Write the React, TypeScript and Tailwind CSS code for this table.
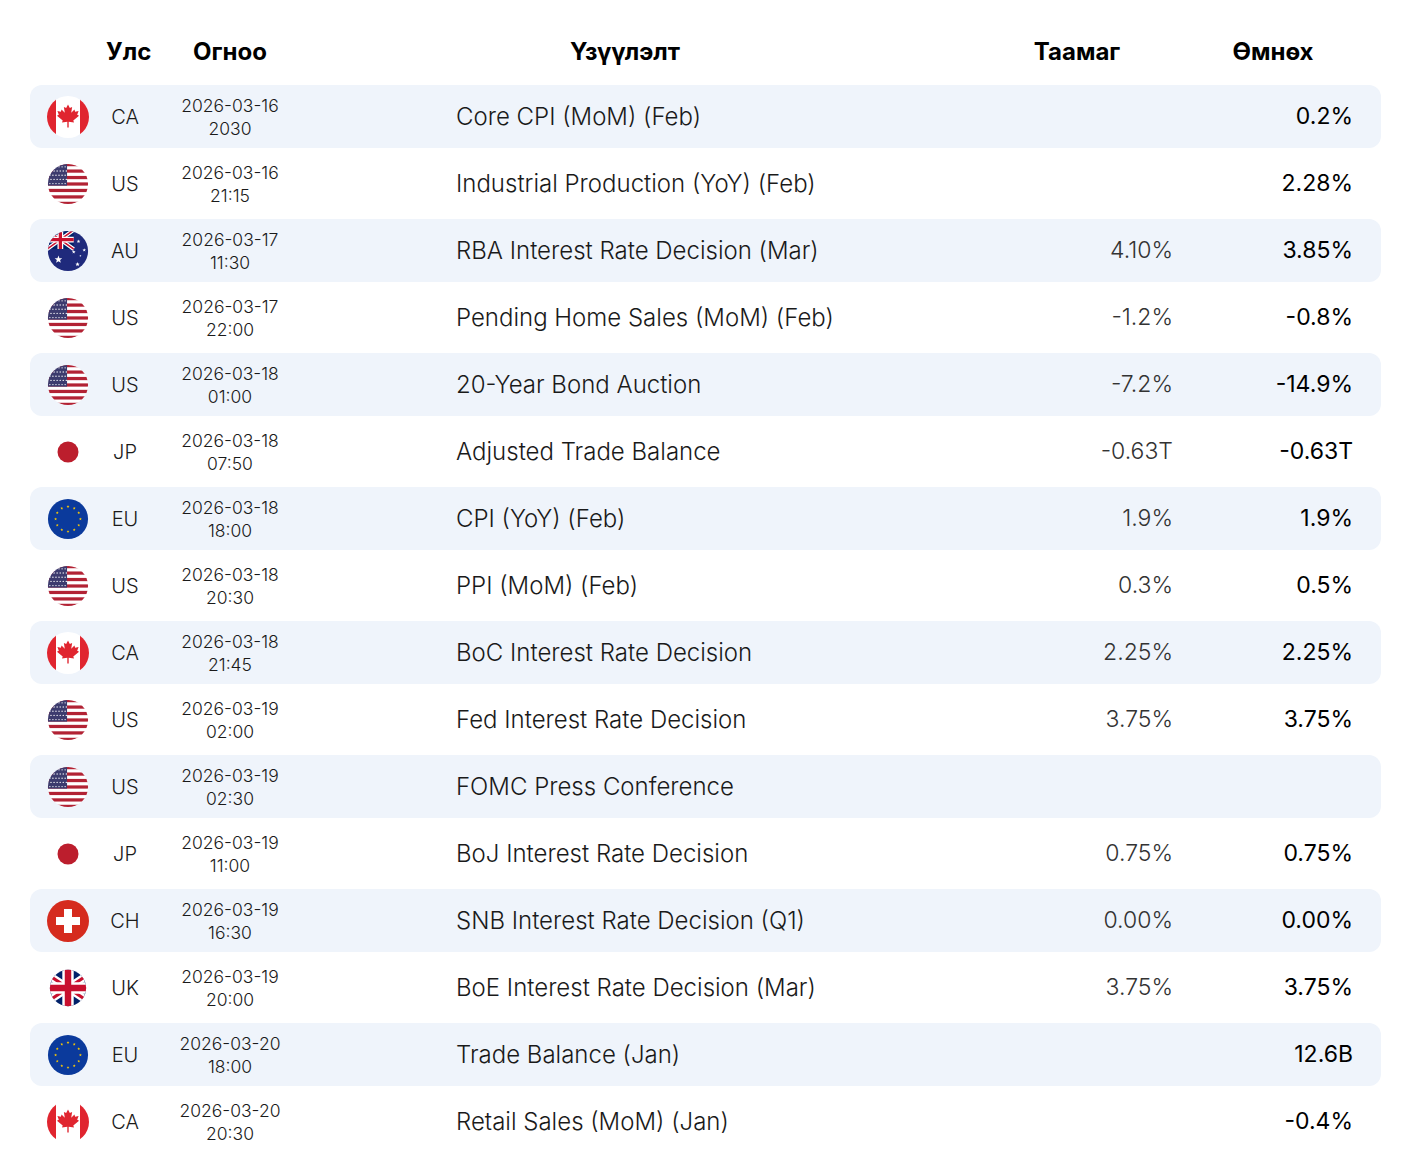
import type { ReactNode } from 'react';

type Code = 'CA' | 'US' | 'AU' | 'JP' | 'EU' | 'CH' | 'UK';

type Row = {
  code: Code;
  date: string;
  time: string;
  event: string;
  forecast?: string;
  previous?: string;
};

const rows: Row[] = [
  { code: 'CA', date: '2026-03-16', time: '2030', event: 'Core CPI (MoM) (Feb)', previous: '0.2%' },
  { code: 'US', date: '2026-03-16', time: '21:15', event: 'Industrial Production (YoY) (Feb)', previous: '2.28%' },
  { code: 'AU', date: '2026-03-17', time: '11:30', event: 'RBA Interest Rate Decision (Mar)', forecast: '4.10%', previous: '3.85%' },
  { code: 'US', date: '2026-03-17', time: '22:00', event: 'Pending Home Sales (MoM) (Feb)', forecast: '-1.2%', previous: '-0.8%' },
  { code: 'US', date: '2026-03-18', time: '01:00', event: '20-Year Bond Auction', forecast: '-7.2%', previous: '-14.9%' },
  { code: 'JP', date: '2026-03-18', time: '07:50', event: 'Adjusted Trade Balance', forecast: '-0.63T', previous: '-0.63T' },
  { code: 'EU', date: '2026-03-18', time: '18:00', event: 'CPI (YoY) (Feb)', forecast: '1.9%', previous: '1.9%' },
  { code: 'US', date: '2026-03-18', time: '20:30', event: 'PPI (MoM) (Feb)', forecast: '0.3%', previous: '0.5%' },
  { code: 'CA', date: '2026-03-18', time: '21:45', event: 'BoC Interest Rate Decision', forecast: '2.25%', previous: '2.25%' },
  { code: 'US', date: '2026-03-19', time: '02:00', event: 'Fed Interest Rate Decision', forecast: '3.75%', previous: '3.75%' },
  { code: 'US', date: '2026-03-19', time: '02:30', event: 'FOMC Press Conference' },
  { code: 'JP', date: '2026-03-19', time: '11:00', event: 'BoJ Interest Rate Decision', forecast: '0.75%', previous: '0.75%' },
  { code: 'CH', date: '2026-03-19', time: '16:30', event: 'SNB Interest Rate Decision (Q1)', forecast: '0.00%', previous: '0.00%' },
  { code: 'UK', date: '2026-03-19', time: '20:00', event: 'BoE Interest Rate Decision (Mar)', forecast: '3.75%', previous: '3.75%' },
  { code: 'EU', date: '2026-03-20', time: '18:00', event: 'Trade Balance (Jan)', previous: '12.6B' },
  { code: 'CA', date: '2026-03-20', time: '20:30', event: 'Retail Sales (MoM) (Jan)', previous: '-0.4%' },
];

// star polygon points around (cx, cy)
const star = (cx: number, cy: number, r: number) => {
  const pts: string[] = [];
  for (let i = 0; i < 10; i++) {
    const rad = i % 2 === 0 ? r : r * 0.42;
    const a = (Math.PI / 5) * i - Math.PI / 2;
    pts.push(`${(cx + rad * Math.cos(a)).toFixed(2)},${(cy + rad * Math.sin(a)).toFixed(2)}`);
  }
  return pts.join(' ');
};

const UnionJack = ({ w, h }: { w: number; h: number }) => (
  <g>
    <rect width={w} height={h} fill="#012169" />
    <path d={`M0,0 L${w},${h} M${w},0 L0,${h}`} stroke="#fff" strokeWidth={h * 0.2} />
    <path d={`M0,0 L${w},${h} M${w},0 L0,${h}`} stroke="#c8102e" strokeWidth={h * 0.08} />
    <path d={`M${w / 2},0 V${h} M0,${h / 2} H${w}`} stroke="#fff" strokeWidth={h * 0.3} />
    <path d={`M${w / 2},0 V${h} M0,${h / 2} H${w}`} stroke="#c8102e" strokeWidth={h * 0.17} />
  </g>
);

const Circle = ({ id, size = 44, children }: { id: string; size?: number; children: ReactNode }) => (
  <svg width={size} height={size} viewBox="0 0 44 44">
    <defs>
      <clipPath id={id}>
        <circle cx="22" cy="22" r="21" />
      </clipPath>
    </defs>
    <g clipPath={`url(#${id})`}>{children}</g>
  </svg>
);

const Flag = ({ code, idx }: { code: Code; idx: number }) => {
  const id = `flag-${idx}`;
  if (code === 'CA') {
    return (
      <Circle id={id}>
        <rect width="44" height="44" fill="#fff" />
        <rect width="10" height="44" fill="#e0252f" />
        <rect x="34" width="10" height="44" fill="#e0252f" />
        <polygon
          transform="translate(10.5 9.5) scale(1.15)"
          fill="#e0252f"
          points="10,0 11.6,3 13.6,2.2 12.8,7.2 15.6,4.4 16.2,6.2 19.2,5.6 18,9 19.6,9.8 14.6,14 15.2,15.6 10.6,15 10.6,20 9.4,20 9.4,15 4.8,15.6 5.4,14 0.4,9.8 2,9 0.8,5.6 3.8,6.2 4.4,4.4 7.2,7.2 6.4,2.2 8.4,3"
        />
      </Circle>
    );
  }
  if (code === 'US') {
    return (
      <Circle id={id} size={42}>
        <rect width="44" height="44" fill="#fff" />
        {Array.from({ length: 7 }).map((_, i) => (
          <rect key={i} y={i * (44 / 6.5)} width="44" height={44 / 13} fill="#b22234" />
        ))}
        <rect width="21" height={(44 / 13) * 7} fill="#3c3b6e" />
        {Array.from({ length: 5 }).map((_, r) =>
          Array.from({ length: 6 }).map((_, c) => (
            <circle key={`${r}-${c}`} cx={3 + c * 3.2 + (r % 2) * 1.2} cy={4 + r * 4.4} r="0.7" fill="#fff" />
          ))
        )}
      </Circle>
    );
  }
  if (code === 'AU') {
    return (
      <Circle id={id} size={42}>
        <rect width="44" height="44" fill="#1f2a7c" />
        <UnionJack w={28} h={20} />
        <polygon points={star(12, 31, 4.2)} fill="#fff" />
        <polygon points={star(33, 12, 2)} fill="#fff" />
        <polygon points={star(28, 23, 2)} fill="#fff" />
        <polygon points={star(39, 21, 2)} fill="#fff" />
        <polygon points={star(32, 36, 2.4)} fill="#fff" />
        <polygon points={star(35, 27, 1.2)} fill="#fff" />
      </Circle>
    );
  }
  if (code === 'JP') {
    return (
      <Circle id={id}>
        <rect width="44" height="44" fill="#fff" />
        <circle cx="22" cy="22" r="10.5" fill="#bc1e2d" />
      </Circle>
    );
  }
  if (code === 'EU') {
    return (
      <Circle id={id} size={42}>
        <rect width="44" height="44" fill="#0b3a9c" />
        {Array.from({ length: 12 }).map((_, i) => {
          const a = (Math.PI / 6) * i;
          return (
            <polygon
              key={i}
              points={star(22 + 13 * Math.cos(a), 22 + 13 * Math.sin(a), 1.6)}
              fill="#ffcc00"
            />
          );
        })}
      </Circle>
    );
  }
  if (code === 'CH') {
    return (
      <Circle id={id}>
        <rect width="44" height="44" fill="#d52b1e" />
        <rect x="18" y="10" width="8" height="24" fill="#fff" />
        <rect x="10" y="18" width="24" height="8" fill="#fff" />
      </Circle>
    );
  }
  return (
    <Circle id={id} size={38}>
      <g transform="translate(-11 0)">
        <UnionJack w={66} h={44} />
      </g>
    </Circle>
  );
};

const cols = 'grid-cols-[76px_38px_172px_1fr_180px_180px]';

export default function App() {
  return (
    <div
      className="w-[1417px] min-h-[1158px] bg-white pt-[20px] text-[#111]"
      style={{ fontFamily: 'Inter, "Noto Sans", sans-serif' }}
    >
      <div className={`ml-[30px] mr-[36px] grid h-[63px] ${cols} items-center pr-[29px] text-[24px] font-bold text-black`}>
        <div />
        <div className="text-center">Улс</div>
        <div className="text-center">Огноо</div>
        <div className="pr-[58px] text-center">Үзүүлэлт</div>
        <div className="pr-[10px] text-center">Таамаг</div>
        <div className="pl-[22px] text-center">Өмнөх</div>
      </div>

      <div className="flex flex-col">
        {rows.map((r, i) => (
          <div key={i} className="h-[67px] pl-[30px] pr-[36px] py-[2px]">
            <div
              className={`grid h-full ${cols} items-center rounded-[12px] pr-[28px] ${
                i % 2 === 0 ? 'bg-[#eff4fb]' : ''
              }`}
            >
              <div className="flex justify-center">
                <Flag code={r.code} idx={i} />
              </div>
              <div className="text-center text-[20px] font-light text-[#1a1a1a]">{r.code}</div>
              <div className="text-center text-[17.5px] leading-[23px] font-light text-[#1a1a1a]">
                <div>{r.date}</div>
                <div>{r.time}</div>
              </div>
              <div className="pl-[140px] text-[24px] font-light text-[#1a1a1a]">{r.event}</div>
              <div className="text-right text-[23px] font-light text-[#333]">{r.forecast}</div>
              <div className="text-right text-[23px] font-normal text-black">{r.previous}</div>
            </div>
          </div>
        ))}
      </div>
    </div>
  );
}
